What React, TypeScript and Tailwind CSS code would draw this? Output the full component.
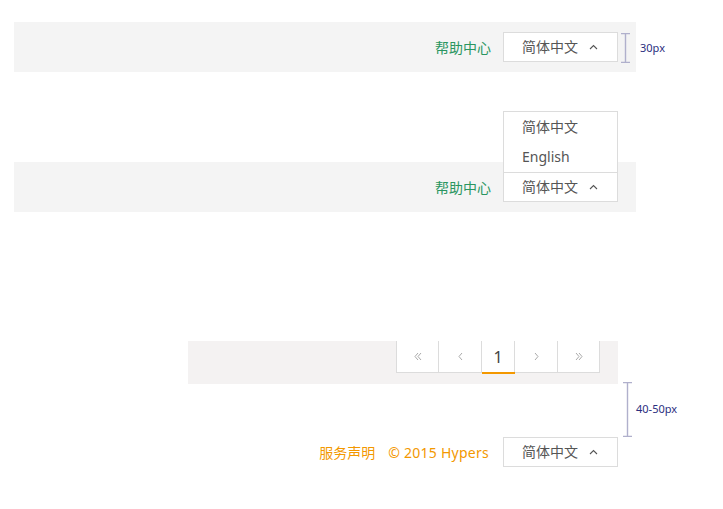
import React from "react";

const font = { fontFamily: '"Noto Sans", "Noto Sans CJK SC", sans-serif' };

function Caret() {
  return (
    <svg width="9" height="6" viewBox="0 0 9 6" className="ml-[11px]">
      <path d="M1 5 L4.5 1.5 L8 5" fill="none" stroke="#555" strokeWidth="1.1" />
    </svg>
  );
}

function LangButton() {
  return (
    <div className="flex items-center w-[115px] h-[30px] border border-[#dcdcdc] bg-white pl-[18px] text-[14px] text-[#555] leading-none">
      <span>简体中文</span>
      <Caret />
    </div>
  );
}

function Chev({ dir, double }: { dir: "l" | "r"; double?: boolean }) {
  const single = dir === "l" ? "M5 1 L2 4.5 L5 8" : "M2 1 L5 4.5 L2 8";
  return (
    <svg width={double ? 10 : 7} height="9" viewBox={double ? "0 0 10 9" : "0 0 7 9"}>
      <path d={single} fill="none" stroke="#aaa" strokeWidth="1" />
      {double && (
        <path
          d={dir === "l" ? "M8 1 L5 4.5 L8 8" : "M5 1 L8 4.5 L5 8"}
          fill="none"
          stroke="#aaa"
          strokeWidth="1"
        />
      )}
    </svg>
  );
}

function Bracket({ h }: { h: number }) {
  return (
    <svg width="11" height={h} viewBox={`0 0 11 ${h}`}>
      <path d={`M1 0.5 H10 M5.5 0.5 V${h - 0.5} M1 ${h - 0.5} H10`} stroke="#b0b0cc" strokeWidth="1.4" fill="none" />
    </svg>
  );
}

export default function App() {
  return (
    <div className="relative w-[723px] h-[509px] bg-white pt-[22px]" style={font}>
      {/* Section 1 */}
      <div className="ml-[14px] w-[622px] h-[50px] bg-[#f4f4f4] flex items-center justify-end pr-[18px]">
        <span className="text-[14px] text-[#2a9660] mr-[12px]">帮助中心</span>
        <LangButton />
      </div>

      {/* Section 2 */}
      <div className="mt-[90px] ml-[14px] w-[622px] h-[50px] bg-[#f4f4f4] flex items-center justify-end pr-[18px]">
        <span className="text-[14px] text-[#2a9660] mr-[12px]">帮助中心</span>
        <div className="relative">
          <div className="absolute bottom-full left-0 w-[115px] border border-b-0 border-[#dcdcdc] bg-white text-[14px] text-[#555]">
            <div className="h-[30px] flex items-center pl-[18px] pb-[2px]">简体中文</div>
            <div className="h-[30px] flex items-center pl-[18px] pb-[2px]">English</div>
          </div>
          <LangButton />
        </div>
      </div>

      {/* Section 3: pagination */}
      <div className="mt-[129px] ml-[188px] w-[430px] h-[43px] bg-[#f4f2f2] flex justify-end pr-[18px]">
        <div className="flex h-[32px] bg-white border border-t-0 border-[#dcdcdc]">
          <div className="w-[42px] flex items-center justify-center border-r border-[#dcdcdc]">
            <Chev dir="l" double />
          </div>
          <div className="w-[43px] flex items-center justify-center border-r border-[#dcdcdc]">
            <Chev dir="l" />
          </div>
          <div className="w-[33px] flex items-center justify-center border-r border-[#dcdcdc] relative text-[16px] text-[#444]">
            1
            <div className="absolute left-0 right-[-1px] bottom-[-2px] h-[2px] bg-[#f39800]" />
          </div>
          <div className="w-[43px] flex items-center justify-center border-r border-[#dcdcdc]">
            <Chev dir="r" />
          </div>
          <div className="w-[41px] flex items-center justify-center">
            <Chev dir="r" double />
          </div>
        </div>
      </div>

      {/* Footer */}
      <div className="mt-[53px] w-[618px] flex items-center justify-end">
        <span className="text-[14px] text-[#f39800] mr-[13px]">服务声明</span>
        <span className="text-[14px] text-[#f39800] mr-[14px] tracking-[0.25px]">© 2015 Hypers</span>
        <LangButton />
      </div>

      {/* Annotations */}
      <div className="absolute left-[620px] top-[33px] flex items-center">
        <Bracket h={30} />
        <span className="ml-[9px] text-[11px] text-[#2b2f80]">30px</span>
      </div>
      <div className="absolute left-[622px] top-[382px] flex items-center">
        <Bracket h={55} />
        <span className="ml-[3px] text-[11px] text-[#2b2f80]">40-50px</span>
      </div>
    </div>
  );
}
